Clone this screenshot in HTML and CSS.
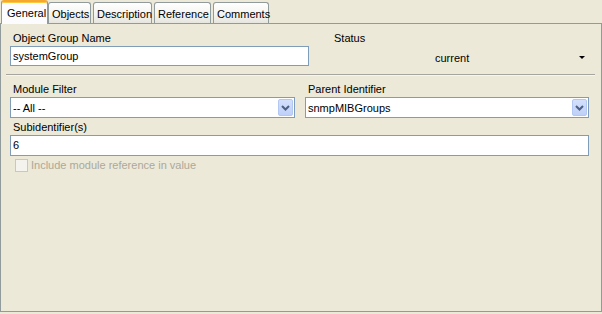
FILE: index.html
```html
<!DOCTYPE html>
<html>
<head>
<meta charset="utf-8">
<link rel="stylesheet" href="styles.css">
</head>
<body>
<div class="tabs">
  <div class="tab selected">General</div>
  <div class="tab t-objects">Objects</div>
  <div class="tab t-desc">Description</div>
  <div class="tab t-ref">Reference</div>
  <div class="tab t-comm">Comments</div>
</div>
<div class="panel">
  <div class="row1">
    <div class="col-name">
      <div class="label">Object Group Name</div>
      <div class="input">systemGroup</div>
    </div>
    <div class="col-status">
      <div class="label">Status</div>
      <div class="flatcombo"><span class="fc-text">current</span><span class="fc-arrow"></span></div>
    </div>
  </div>
  <div class="sep"></div>
  <div class="row2">
    <div class="col-mod">
      <div class="label">Module Filter</div>
      <div class="combo"><span class="c-text">-- All --</span><span class="btn"><svg width="9" height="6" viewBox="0 0 9 6"><path d="M1 1 L4.5 4.5 L8 1" fill="none" stroke="#4d6185" stroke-width="2"/></svg></span></div>
    </div>
    <div class="col-parent">
      <div class="label">Parent Identifier</div>
      <div class="combo"><span class="c-text">snmpMIBGroups</span><span class="btn"><svg width="9" height="6" viewBox="0 0 9 6"><path d="M1 1 L4.5 4.5 L8 1" fill="none" stroke="#4d6185" stroke-width="2"/></svg></span></div>
    </div>
  </div>
  <div class="label sub-label">Subidentifier(s)</div>
  <div class="input wide">6</div>
  <div class="check">
    <span class="box"></span>
    <span class="check-text">Include module reference in value</span>
  </div>
</div>
</body>
</html>
```
FILE: styles.css
```css
* { box-sizing: border-box; }
html, body { margin: 0; padding: 0; }
body {
  width: 602px;
  height: 314px;
  background: #ece9d8;
  font-family: "Liberation Sans", Arial, sans-serif;
  font-size: 11px;
  color: #000;
  overflow: hidden;
}
.tabs {
  display: flex;
  align-items: flex-end;
  height: 24px;
  padding-left: 1px;
  margin-bottom: -1px;
  position: relative;
  z-index: 2;
}
.tab {
  height: 21px;
  border: 1px solid #919b9c;
  border-bottom: none;
  border-radius: 3px 3px 0 0;
  background: linear-gradient(#ffffff, #f3f3ef 60%, #e6e5de);
  padding: 5px 0 0 3px;
  line-height: 13px;
  margin-bottom: 1px;
  margin-right: 2px;
}
.tab.selected {
  height: 24px;
  margin-bottom: 0;
  margin-right: 0;
  width: 47px;
  border-top: 2px solid #f6a732;
  border-left-color: #919b9c;
  background: #fcfcfe;
  padding: 5px 0 0 5px;
  border-radius: 3px 3px 0 0;
  box-shadow: inset 0 1px 0 #ffc73c;
}
.t-objects { width: 43px; }
.t-desc { width: 59px; }
.t-ref { width: 57px; }
.t-comm { width: 56px; }
.panel {
  width: 602px;
  height: 289px;
  border: 1px solid #919b9c;
  border-right-color: #919b9c;
  background: #ece9d8;
  padding: 8px 0 0 9px;
  position: relative;
  z-index: 1;
}
.label {
  height: 14px;
  line-height: 13px;
  padding-left: 3px;
}
.row1 {
  display: flex;
}
.col-name { width: 299px; }
.col-status { margin-left: 22px; width: 263px; }
.input {
  height: 20px;
  background: #fff;
  border: 1px solid #7f9db9;
  padding: 0 0 0 2px;
  line-height: 18px;
}
.flatcombo {
  height: 20px;
  display: flex;
  align-items: center;
  position: relative;
}
.fc-text {
  margin-left: 104px;
  margin-top: 4px;
}
.fc-arrow {
  position: absolute;
  left: 248px;
  top: 10px;
  width: 0;
  height: 0;
  border-left: 3px solid transparent;
  border-right: 3px solid transparent;
  border-top: 3px solid #000;
}
.sep {
  margin: 8px 0 0 -4px;
  width: 589px;
  height: 1px;
  background: #a6a59f;
  border-bottom: 1px solid #f6f5f0;
  height: 2px;
}
.row2 {
  display: flex;
  margin-top: 7px;
}
.col-mod { width: 285px; }
.col-parent { margin-left: 10px; width: 284px; }
.combo {
  height: 21px;
  background: #fff;
  border: 1px solid #7f9db9;
  display: flex;
  align-items: center;
  justify-content: space-between;
  padding: 0 1px 0 2px;
}
.btn {
  width: 15px;
  height: 17px;
  border-radius: 2px;
  background: linear-gradient(#d4e1fc, #bfd0f8);
  border: 1px solid #b3c7f3;
  display: flex;
  align-items: center;
  justify-content: center;
}
.sub-label {
  margin-top: 3px;
}
.wide {
  width: 579px;
  height: 21px;
  margin-top: 0;
}
.check {
  display: flex;
  align-items: center;
  margin-top: 3px;
  padding-left: 5px;
  height: 13px;
}
.box {
  width: 13px;
  height: 13px;
  border: 1px solid #cac8bb;
  background: #f4f3ee;
}
.check-text {
  color: #aca899;
  margin-left: 3px;
  line-height: 13px;
}
```
